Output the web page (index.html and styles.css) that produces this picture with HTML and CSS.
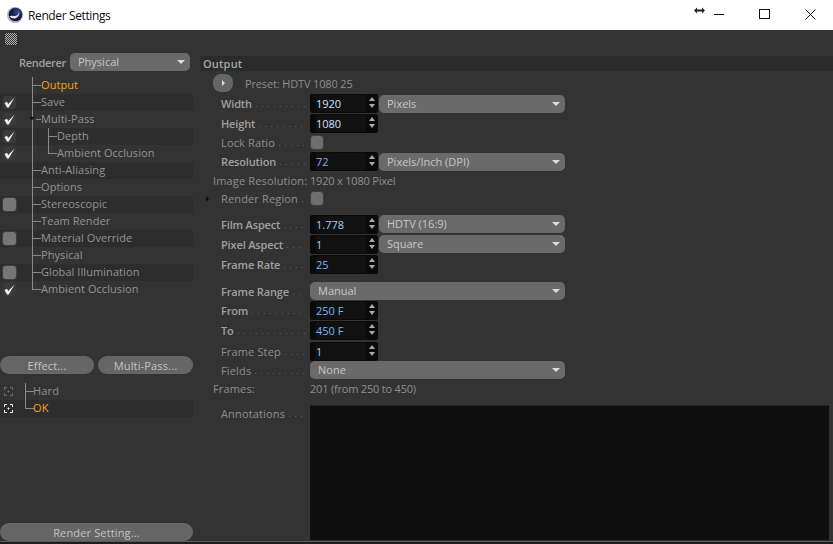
FILE: index.html
```html
<!DOCTYPE html>
<html lang="en">
<head>
<meta charset="utf-8">
<title>Render Settings</title>
<link rel="stylesheet" href="styles.css">
</head>
<body>
<div class="app">
  <header class="titlebar">
    <svg class="logo" width="18" height="18" viewBox="0 0 18 18"><defs><radialGradient id="g" cx="0.65" cy="0.3" r="0.8"><stop offset="0" stop-color="#3c4a8c"/><stop offset="0.55" stop-color="#161c44"/><stop offset="1" stop-color="#0a0c1e"/></radialGradient></defs><circle cx="9" cy="9" r="8" fill="#aab0d8"/><circle cx="9.500" cy="8.500" r="6.800" fill="url(#g)"/><path d="M3.500 10.500c2.500 2.800 7 2.800 9-.8.800-1.500 1-2.700.6-4-.3 2.800-2.800 4.800-5.800 4.300-1.500-.2-3-.6-3.800.5z" fill="#dfe3f2"/></svg>
    <span class="title">Render Settings</span>
    <svg class="ctrl-resize" width="11" height="7" viewBox="0 0 11 7"><path d="M0 3.500 3 .5v2h5v-2l3 3-3 3v-2H3v2z" fill="#222"/></svg>
    <span class="ctrl ctrl-min"></span>
    <span class="ctrl ctrl-max"></span>
    <svg class="ctrl-close" width="11" height="11" viewBox="0 0 11 11"><path d="M.5.5l10 10M10.500.5l-10 10" stroke="#111" fill="none"/></svg>
  </header>
  <div class="toolstrip"><span class="grip"></span></div>
  <main class="main">
    <aside class="left">
      <div class="renderer"><span class="renderer-label">Renderer</span><div class="drop drop-renderer">Physical</div></div>
      <ul class="tree">
        <li class="node"><span class="check"></span><span class="branch"></span><span class="on">Output</span></li>
        <li class="node alt"><span class="check yes"></span><span class="branch"></span>Save</li>
        <li class="node"><span class="check yes"></span><span class="branch short"><i class="fold"></i></span>Multi-Pass</li>
        <li class="node alt"><span class="check yes"></span><span class="pass"></span><span class="branch"></span>Depth</li>
        <li class="node"><span class="check yes"></span><span class="pass"></span><span class="branch end"></span>Ambient Occlusion</li>
        <li class="node alt"><span class="check"></span><span class="branch"></span>Anti-Aliasing</li>
        <li class="node"><span class="check"></span><span class="branch"></span>Options</li>
        <li class="node alt"><span class="check no"></span><span class="branch"></span>Stereoscopic</li>
        <li class="node"><span class="check"></span><span class="branch"></span>Team Render</li>
        <li class="node alt"><span class="check no"></span><span class="branch"></span>Material Override</li>
        <li class="node"><span class="check"></span><span class="branch"></span>Physical</li>
        <li class="node alt"><span class="check no"></span><span class="branch"></span>Global Illumination</li>
        <li class="node"><span class="check yes"></span><span class="branch end"></span>Ambient Occlusion</li>
      </ul>
      <div class="buttons"><button class="btn btn-effect">Effect...</button><button class="btn btn-pass">Multi-Pass...</button></div>
      <ul class="effects">
        <li class="effect"><span class="target dim"></span><span class="branch"></span>Hard</li>
        <li class="effect alt"><span class="target"></span><span class="branch end"></span><span class="on">OK</span></li>
      </ul>
      <button class="btn btn-render">Render Setting...</button>
    </aside>
    <section class="right">
      <h2 class="section">Output</h2>
      <div class="preset"><span class="preset-btn"></span><span>Preset: HDTV 1080 25</span></div>
      <div class="row h19"><span class="label b"><span>Width</span><i></i></span><span class="num white"><span>1920</span></span><div class="drop unit">Pixels</div></div>
      <div class="row h20"><span class="label b"><span>Height</span><i></i></span><span class="num white"><span>1080</span></span></div>
      <div class="row h19"><span class="label"><span>Lock Ratio</span><i></i></span><span class="box"></span></div>
      <div class="row h19"><span class="label b"><span>Resolution</span><i></i></span><span class="num"><span>72</span></span><div class="drop unit">Pixels/Inch (DPI)</div></div>
      <div class="row h18 info"><span class="info-label">Image Resolution:</span><span class="value">1920 x 1080 Pixel</span></div>
      <div class="row h18"><span class="label"><i class="fold-right"></i><span>Render Region</span><i></i></span><span class="box"></span></div>
      <div class="row h20 gap7"><span class="label b"><span>Film Aspect</span><i></i></span><span class="num pale"><span>1.778</span></span><div class="drop unit">HDTV (16:9)</div></div>
      <div class="row h20"><span class="label b"><span>Pixel Aspect</span><i></i></span><span class="num pale"><span>1</span></span><div class="drop unit">Square</div></div>
      <div class="row h20"><span class="label b"><span>Frame Rate</span><i></i></span><span class="num"><span>25</span></span></div>
      <div class="row h19 gap7"><span class="label b nudge"><span>Frame Range</span><i></i></span><div class="drop wide">Manual</div></div>
      <div class="row h20"><span class="label b"><span>From</span><i></i></span><span class="num"><span>250 F</span></span></div>
      <div class="row h20"><span class="label b"><span>To</span><i></i></span><span class="num"><span>450 F</span></span></div>
      <div class="row h20 gap1"><span class="label"><span>Frame Step</span><i></i></span><span class="num pale"><span>1</span></span></div>
      <div class="row h18"><span class="label"><span>Fields</span><i></i></span><div class="drop wide">None</div></div>
      <div class="row h18 info"><span class="info-label">Frames:</span><span class="value">201 (from 250 to 450)</span></div>
      <div class="row annot"><span class="label"><span>Annotations</span><i></i></span><div class="notes"></div></div>
    </section>
  </main>
  <div class="footer"></div>
</div>
</body>
</html>
```
FILE: styles.css
```css
* { box-sizing: border-box; }
html, body { margin: 0; padding: 0; }
body { width: 833px; height: 544px; overflow: hidden; background: #333; font-family: "Open Sans", sans-serif; font-size: 11px; color: #999; }
ul { list-style: none; margin: 0; padding: 0; }
i { font-style: normal; }
.app { display: flex; flex-direction: column; height: 544px; }

.titlebar { height: 30px; flex: none; background: #fff; display: flex; align-items: center; position: relative; padding-left: 6px; }
.logo { flex: none; }
.title { margin-left: 4px; font-size: 12px; color: #111; letter-spacing: -.38px; }
.ctrl-resize { position: absolute; left: 694px; top: 7px; }
.ctrl { position: absolute; }
.ctrl-min { left: 714px; top: 14px; width: 10px; height: 1px; background: #111; }
.ctrl-max { left: 759px; top: 9px; width: 11px; height: 10px; border: 1px solid #111; }
.ctrl-close { position: absolute; left: 805px; top: 9px; }

.toolstrip { height: 23px; flex: none; padding: 3px 0 0 5px; }
.grip { display: block; width: 12px; height: 12px; background: repeating-conic-gradient(#b0b0b0 0 25%, transparent 0 50%) 0 0 / 2px 2px; border-radius: 2px; }

.main { flex: 1; display: flex; min-height: 0; }
.left { width: 193px; flex: none; display: flex; flex-direction: column; }
.renderer { display: flex; align-items: center; height: 18px; padding-left: 19px; }
.renderer-label { width: 51px; font-weight: 600; color: #a0a0a0; letter-spacing: -.3px; }

.drop { position: relative; height: 18px; line-height: 17px; background: #6a6a6a; border-radius: 5px; color: #c6c6c6; padding-left: 8px; }
.drop::after { content: ""; position: absolute; right: 5px; top: 7px; border: 4px solid transparent; border-top: 4px solid #dcdcdc; border-bottom: 0; }
.drop-renderer { width: 120px; }

.tree { margin-top: 6px; }
.node { display: flex; height: 17px; line-height: 16px; white-space: nowrap; letter-spacing: .07px; color: #939393; }
.alt { background: #2d2d2d; }
.on { color: #f4a41c; }
.check { width: 32px; flex: none; position: relative; }
.check::before { position: absolute; left: 3px; top: 2px; width: 13px; height: 13px; border-radius: 3px; }
.check.yes::before { content: ""; background: #3a3a3a url("data:image/svg+xml,%3Csvg xmlns='http://www.w3.org/2000/svg' width='13' height='13'%3E%3Cpath d='M1.500 7 4 5.800 5.300 8 11.500 1.500 5.800 11.500H4z' fill='%23eee'/%3E%3C/svg%3E"); }
.check.no::before { content: ""; background: #767676; box-shadow: 0 0 0 1px #3e3e3e; }
.branch { width: 9px; flex: none; position: relative; border-left: 1px solid #8a8a8a; }
.branch::after { content: ""; position: absolute; left: 0; top: 8px; width: 8px; height: 1px; background: #8a8a8a; }
.branch.end { height: 9px; }
.branch.short::after { left: 3px; width: 5px; }
.fold { position: absolute; left: -4px; top: 6px; border: 3px solid transparent; border-top: 3px solid #111; border-bottom: 0; }
.pass { width: 16px; flex: none; border-left: 1px solid #8a8a8a; }

.buttons { display: flex; gap: 4px; margin-top: 58px; }
.btn { height: 18px; padding: 1px 0 0; border: 0; border-radius: 9px; background: #666; color: #c4c4c4; font: 11px/17px "Open Sans", sans-serif; letter-spacing: .15px; }
.btn-effect { width: 94px; }
.btn-pass { width: 95px; }
.effects { margin-top: 9px; }
.effect { display: flex; height: 17px; line-height: 15px; letter-spacing: .2px; color: #8e8e8e; }
.effect .branch { width: 8px; }
.target { width: 25px; flex: none; position: relative; }
.target::before { content: ""; position: absolute; left: 3px; top: 3px; width: 11px; height: 11px; background: url("data:image/svg+xml,%3Csvg xmlns='http://www.w3.org/2000/svg' width='11' height='11'%3E%3Cpath d='M1.500 4V1.500H4M7 1.500h2.500V4M1.500 7v2.500H4M7 9.500h2.500V7M4.500 5.500h2M5.500 4.500v2' fill='none' stroke='%23f2f2f2'/%3E%3C/svg%3E"); }
.target.dim { opacity: .3; }
.btn-render { margin-top: auto; width: 193px; }

.right { flex: 1; margin-left: 7px; padding-top: 3px; min-width: 0; }
.section { height: 15px; margin: 0; background: #2b2b2b; font-size: 11px; line-height: 15px; font-weight: 600; color: #a6a6a6; padding-left: 3px; letter-spacing: .2px; }
.preset { display: flex; align-items: center; height: 18px; margin: 3px 0 2px 13px; color: #8e8e8e; letter-spacing: -.15px; }
.preset-btn { width: 20px; height: 18px; border-radius: 8px; background: #666; margin-right: 12px; position: relative; }
.preset-btn::after { content: ""; position: absolute; left: 9px; top: 6px; border: 3px solid transparent; border-left: 3px solid #ddd; border-right: 0; }

.row { display: flex; align-items: center; padding-left: 21px; }
.h20 { height: 20px; }
.h19 { height: 19px; }
.h18 { height: 18px; }
.gap7 { margin-top: 7px; }
.gap1 { margin-top: 1px; }
.label { width: 89px; flex: none; display: flex; align-items: center; position: relative; padding-right: 5px; color: #8e8e8e; letter-spacing: .15px; white-space: nowrap; }
.label.b { font-weight: 600; color: #a0a0a0; letter-spacing: -.15px; }
.label.nudge { padding-top: 2px; }
.label > i:last-child { flex: 1; height: 1px; margin: 6px 0 0 4px; background: repeating-linear-gradient(90deg, #5e5e5e 0 1px, transparent 1px 6px); }
.fold-right { position: absolute; left: -15px; top: 5px; border: 3px solid transparent; border-left: 3px solid #111; border-right: 0; }
.info { padding-left: 13px; color: #8e8e8e; letter-spacing: .15px; }
.info-label { width: 97px; flex: none; }
.value { letter-spacing: -.2px; }

.num { width: 68px; height: 19px; flex: none; position: relative; background: #0a0a0a; border-radius: 2px; padding: 1px 12px 1px 6px; color: #78b4f5; font-size: 11px; }
.num span { display: block; height: 17px; line-height: 17px; background: #111; }
.num.white { color: #cfe2ff; }
.num.pale { color: #a8cdf2; }
.num::before, .num::after { content: ""; position: absolute; left: 59px; border: 3.500px solid transparent; }
.num::before { top: 3px; border-bottom: 4px solid #aaa; border-top: 0; }
.num::after { top: 10px; border-top: 4px solid #aaa; border-bottom: 0; }
.box { width: 12px; height: 13px; border-radius: 3px; background: #6e6e6e; box-shadow: 0 0 0 1px #3d3d3d; margin-left: 1px; }
.unit { width: 186px; margin-left: 1px; }
.wide { width: 255px; }

.annot { height: 136px; margin-top: 8px; align-items: flex-start; padding-right: 4px; }
.annot .label { margin-top: 1px; }
.notes { flex: 1; height: 135px; background: #0f0f0f; border-top: 1px solid #222; }
.footer { height: 3px; flex: none; background: #1e1e1e; border-top: 1px solid #5a5a5a; }
```
